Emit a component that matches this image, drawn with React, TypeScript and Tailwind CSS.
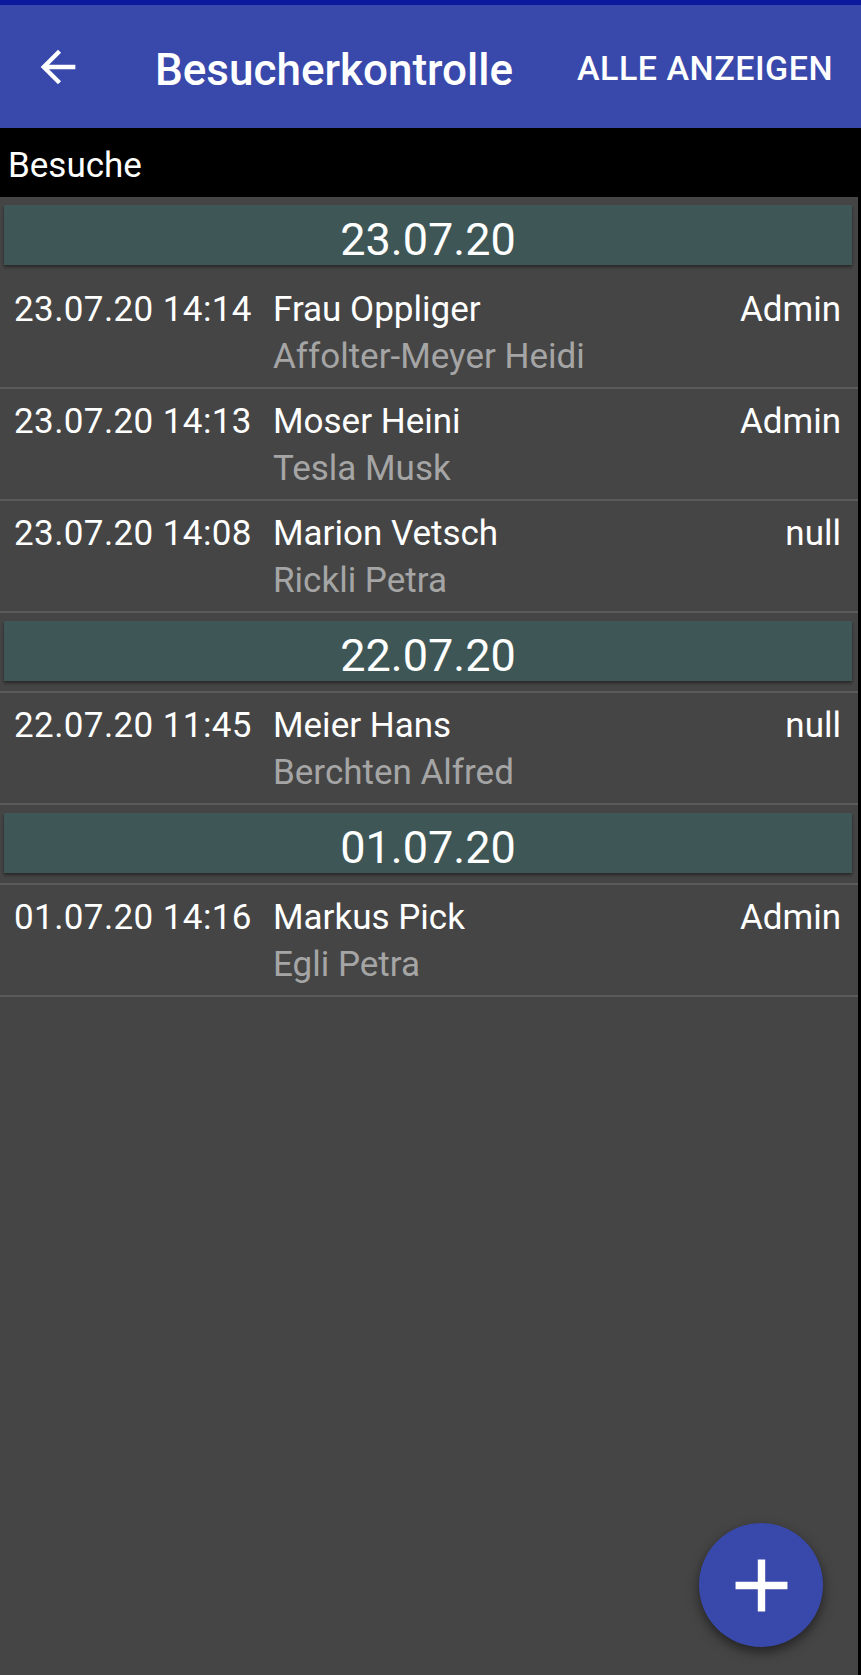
import React from 'react';

type Visit = {
  day: string;
  time: string;
  host: string;
  visitor: string;
  user: string;
};

const visits: Visit[] = [
  { day: '23.07.20', time: '23.07.20 14:14', host: 'Frau Oppliger', visitor: 'Affolter-Meyer Heidi', user: 'Admin' },
  { day: '23.07.20', time: '23.07.20 14:13', host: 'Moser Heini', visitor: 'Tesla Musk', user: 'Admin' },
  { day: '23.07.20', time: '23.07.20 14:08', host: 'Marion Vetsch', visitor: 'Rickli Petra', user: 'null' },
  { day: '22.07.20', time: '22.07.20 11:45', host: 'Meier Hans', visitor: 'Berchten Alfred', user: 'null' },
  { day: '01.07.20', time: '01.07.20 14:16', host: 'Markus Pick', visitor: 'Egli Petra', user: 'Admin' },
];

function DayHeader({ day, first }: { day: string; first: boolean }) {
  return (
    <div
      className={`pt-[8px] pb-[10px] border-b-2 ${first ? 'border-transparent' : 'border-[#5a5a5a]'}`}
    >
      <div className="ml-[4px] mr-[6px] h-[60px] pt-[8px] flex items-center justify-center bg-[#3e5756] shadow-[0_2px_3px_rgba(0,0,0,0.45)]">
        <span className="text-[45px] leading-none text-white">{day}</span>
      </div>
    </div>
  );
}

function VisitRow({ visit }: { visit: Visit }) {
  return (
    <div className="flex pt-[12px] pb-[10px] pr-[17px] border-b-2 border-[#5a5a5a] text-[35px]">
      <div className="w-[273px] pl-[14px] leading-[41px] tracking-[0.4px] text-white shrink-0">{visit.time}</div>
      <div className="flex-1 flex flex-col">
        <div className="flex justify-between leading-[41px] text-white">
          <span>{visit.host}</span>
          <span>{visit.user}</span>
        </div>
        <div className="mt-[6px] leading-[41px] text-[#a5a5a5]">{visit.visitor}</div>
      </div>
    </div>
  );
}

export default function App() {
  let lastDay = '';

  return (
    <div
      className="relative w-[861px] h-[1675px] overflow-hidden flex flex-col bg-[#454545]"
      style={{ fontFamily: 'Roboto, "Noto Sans", sans-serif' }}
    >
      {/* status strip */}
      <div className="h-[5px] bg-[#0b199d]" />

      {/* toolbar */}
      <div className="h-[123px] bg-[#3949ab] flex items-center text-white">
        <div className="w-[52px] h-[52px] ml-[32px]">
          <svg viewBox="0 0 24 24" className="w-full h-full" fill="white">
            <path d="M20 11H7.83l5.59-5.59L12 4l-8 8 8 8 1.41-1.41L7.83 13H20v-2z" />
          </svg>
        </div>
        <h1 className="ml-[71px] pt-[6px] text-[44px] font-medium leading-none">Besucherkontrolle</h1>
        <button className="ml-auto mr-[28px] pt-[3px] text-[34px] font-medium leading-none tracking-[0.5px]">
          ALLE ANZEIGEN
        </button>
      </div>

      {/* section label */}
      <div className="h-[69px] bg-black pl-[8px] pt-[18px]">
        <span className="text-[35px] leading-[40px] text-white">Besuche</span>
      </div>

      {/* list */}
      <div className="flex-1 border-r-[3px] border-black">
        {visits.map((v, i) => {
          const showHeader = v.day !== lastDay;
          lastDay = v.day;
          return (
            <div key={i}>
              {showHeader && <DayHeader day={v.day} first={i === 0} />}
              <VisitRow visit={v} />
            </div>
          );
        })}
      </div>

      {/* FAB */}
      <button className="absolute right-[38px] bottom-[28px] w-[124px] h-[124px] rounded-full bg-[#3949ab] flex items-center justify-center shadow-[0_5px_12px_rgba(0,0,0,0.5)]">
        <svg viewBox="0 0 24 24" className="w-[89px] h-[89px]" fill="white">
          <path d="M19 13h-6v6h-2v-6H5v-2h6V5h2v6h6v2z" />
        </svg>
      </button>
    </div>
  );
}
